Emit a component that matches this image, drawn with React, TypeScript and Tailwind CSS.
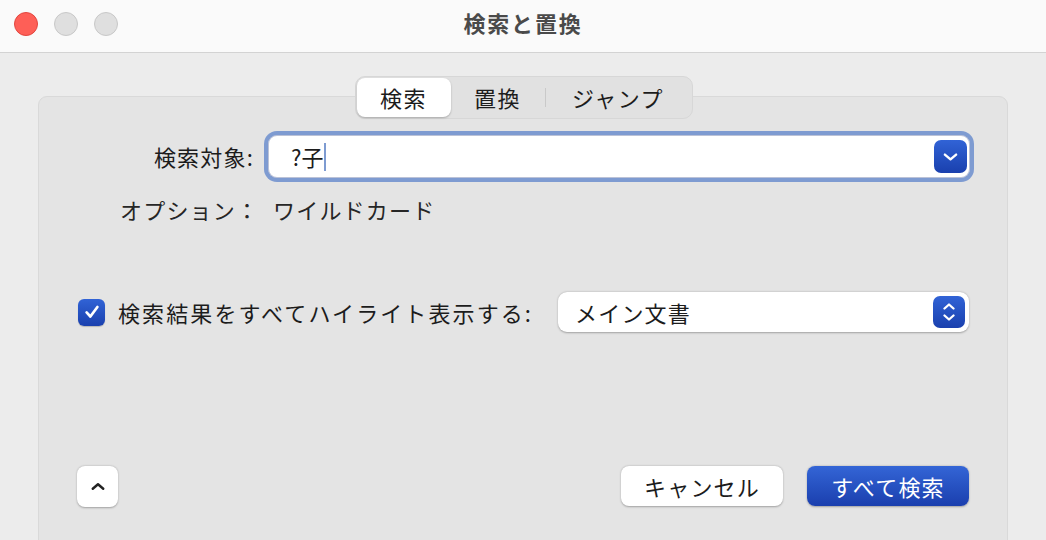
import React from "react";

const FONT = { fontFamily: '"Noto Sans CJK JP", "Noto Sans", sans-serif' };

function ChevronDown({ className = "" }: { className?: string }) {
  return (
    <svg viewBox="0 0 16 10" className={className} fill="none" stroke="currentColor" strokeWidth={2.6} strokeLinecap="round" strokeLinejoin="round">
      <path d="M2 2.5 L8 7.5 L14 2.5" />
    </svg>
  );
}

export default function App() {
  return (
    <div className="w-[1046px] h-[540px] overflow-hidden bg-[#ececec] text-[#1c1c1c]" style={FONT}>
      {/* Title bar */}
      <div className="h-[53px] bg-[#fafafa] border-b border-[#d3d3d3] grid grid-cols-[1fr_auto_1fr] items-center">
        <div className="flex items-center gap-[16px] pl-[14px] -mt-[5px]">
          <div className="w-[24px] h-[24px] rounded-full bg-[#fe5f57] border border-[#e2463f]" />
          <div className="w-[24px] h-[24px] rounded-full bg-[#dfdfdf] border border-[#c8c8c8]" />
          <div className="w-[24px] h-[24px] rounded-full bg-[#dfdfdf] border border-[#c8c8c8]" />
        </div>
        <div className="text-[22px] font-bold text-[#4a4a4a] tracking-[1.8px] -mt-[8px]">検索と置換</div>
        <div />
      </div>

      {/* Body */}
      <div className="px-[38px] pt-[23px]">
        {/* Segmented control */}
        <div className="flex justify-center relative z-10 pl-[1px]">
          <div className="h-[43px] rounded-[10px] bg-[#e1e1e1] border border-[#d7d7d7] p-[1px] flex items-stretch text-[22px] text-[#1c1c1c] tracking-[1.5px]">
            <div className="w-[94px] rounded-[8px] bg-white shadow-[0_1px_2px_rgba(0,0,0,0.25)] flex items-center justify-center">検索</div>
            <div className="w-[94px] flex items-center justify-center">置換</div>
            <div className="w-[1px] my-[10px] bg-[#c9c9c9]" />
            <div className="w-[145px] flex items-center justify-center">ジャンプ</div>
          </div>
        </div>

        {/* Panel */}
        <div className="-mt-[23px] h-[470px] rounded-[9px] border border-[#d9d9d9] bg-[#e4e4e4] pt-[34px] text-[22px] tracking-[1.2px] text-[#1c1c1c]">
          {/* Search row */}
          <div className="flex items-center h-[51px] pr-[33px]">
            <div className="w-[215px] text-right">検索対象:</div>
            <div className="ml-[10px] flex-1 h-[51px] rounded-[13px] bg-[#7e9bd1] p-[4px]">
              <div className="h-full rounded-[9px] bg-white flex items-center pl-[23px] pr-[3px] shadow-[inset_0_0_0_1px_rgba(60,80,140,0.35)]">
                <span className="tracking-[0px]">?子</span>
                <span className="w-[2px] h-[28px] bg-[#7e9bd1] ml-[1px]" />
                <div className="flex-1" />
                <div className="w-[33px] h-[33px] rounded-[7px] bg-gradient-to-b from-[#3163d6] to-[#1a40ae] flex items-center justify-center text-white">
                  <ChevronDown className="w-[15px] h-[10px]" />
                </div>
              </div>
            </div>
          </div>

          {/* Options row */}
          <div className="mt-[13px] h-[28px] flex items-center pl-[81px] text-[#262626]">
            <span className="w-[153px]">オプション：</span>
            <span>ワイルドカード</span>
          </div>

          {/* Highlight row */}
          <div className="mt-[69px] h-[40px] flex items-center pl-[39px] pr-[38px]">
            <div className="w-[27px] h-[27px] rounded-[6px] bg-gradient-to-b from-[#3163d6] to-[#1a40ae] flex items-center justify-center shadow-[0_1px_1px_rgba(0,0,0,0.2)]">
              <svg viewBox="0 0 20 20" className="w-[18px] h-[18px]" fill="none" stroke="white" strokeWidth={3} strokeLinecap="round" strokeLinejoin="round">
                <path d="M4 10.5 L8.2 15 L16 4.5" />
              </svg>
            </div>
            <span className="ml-[13px] tracking-[2.1px]">検索結果をすべてハイライト表示する:</span>
            <div className="ml-auto w-[411px] h-[40px] rounded-[9px] bg-white shadow-[0_0.5px_2px_rgba(0,0,0,0.3)] flex items-center pl-[17px] pr-[4px]">
              <span>メイン文書</span>
              <div className="flex-1" />
              <div className="w-[32px] h-[32px] rounded-[7px] bg-gradient-to-b from-[#3163d6] to-[#1a40ae] flex flex-col items-center justify-center gap-[4px] text-white">
                <svg viewBox="0 0 12 7" className="w-[12px] h-[7px]" fill="none" stroke="currentColor" strokeWidth={2.3} strokeLinecap="round" strokeLinejoin="round">
                  <path d="M1.5 5.5 L6 1.5 L10.5 5.5" />
                </svg>
                <svg viewBox="0 0 12 7" className="w-[12px] h-[7px]" fill="none" stroke="currentColor" strokeWidth={2.3} strokeLinecap="round" strokeLinejoin="round">
                  <path d="M1.5 1.5 L6 5.5 L10.5 1.5" />
                </svg>
              </div>
            </div>
          </div>

          {/* Buttons row */}
          <div className="mt-[134px] h-[40px] flex items-center pl-[38px] pr-[38px]">
            <div className="w-[41px] h-[41px] rounded-[8px] bg-white shadow-[0_0.5px_2px_rgba(0,0,0,0.3)] flex items-center justify-center text-[#222]">
              <svg viewBox="0 0 16 10" className="w-[14px] h-[9px]" fill="none" stroke="currentColor" strokeWidth={2.8} strokeLinecap="round" strokeLinejoin="round">
                <path d="M2 7.5 L8 2.5 L14 7.5" />
              </svg>
            </div>
            <div className="flex-1" />
            <div className="w-[162px] h-[40px] rounded-[8px] bg-white shadow-[0_0.5px_2px_rgba(0,0,0,0.3)] flex items-center justify-center">キャンセル</div>
            <div className="ml-[24px] w-[162px] h-[40px] rounded-[8px] bg-gradient-to-b from-[#3465d6] to-[#1b3fae] shadow-[0_0.5px_2px_rgba(0,0,0,0.3)] flex items-center justify-center text-white">すべて検索</div>
          </div>
        </div>
      </div>
    </div>
  );
}
